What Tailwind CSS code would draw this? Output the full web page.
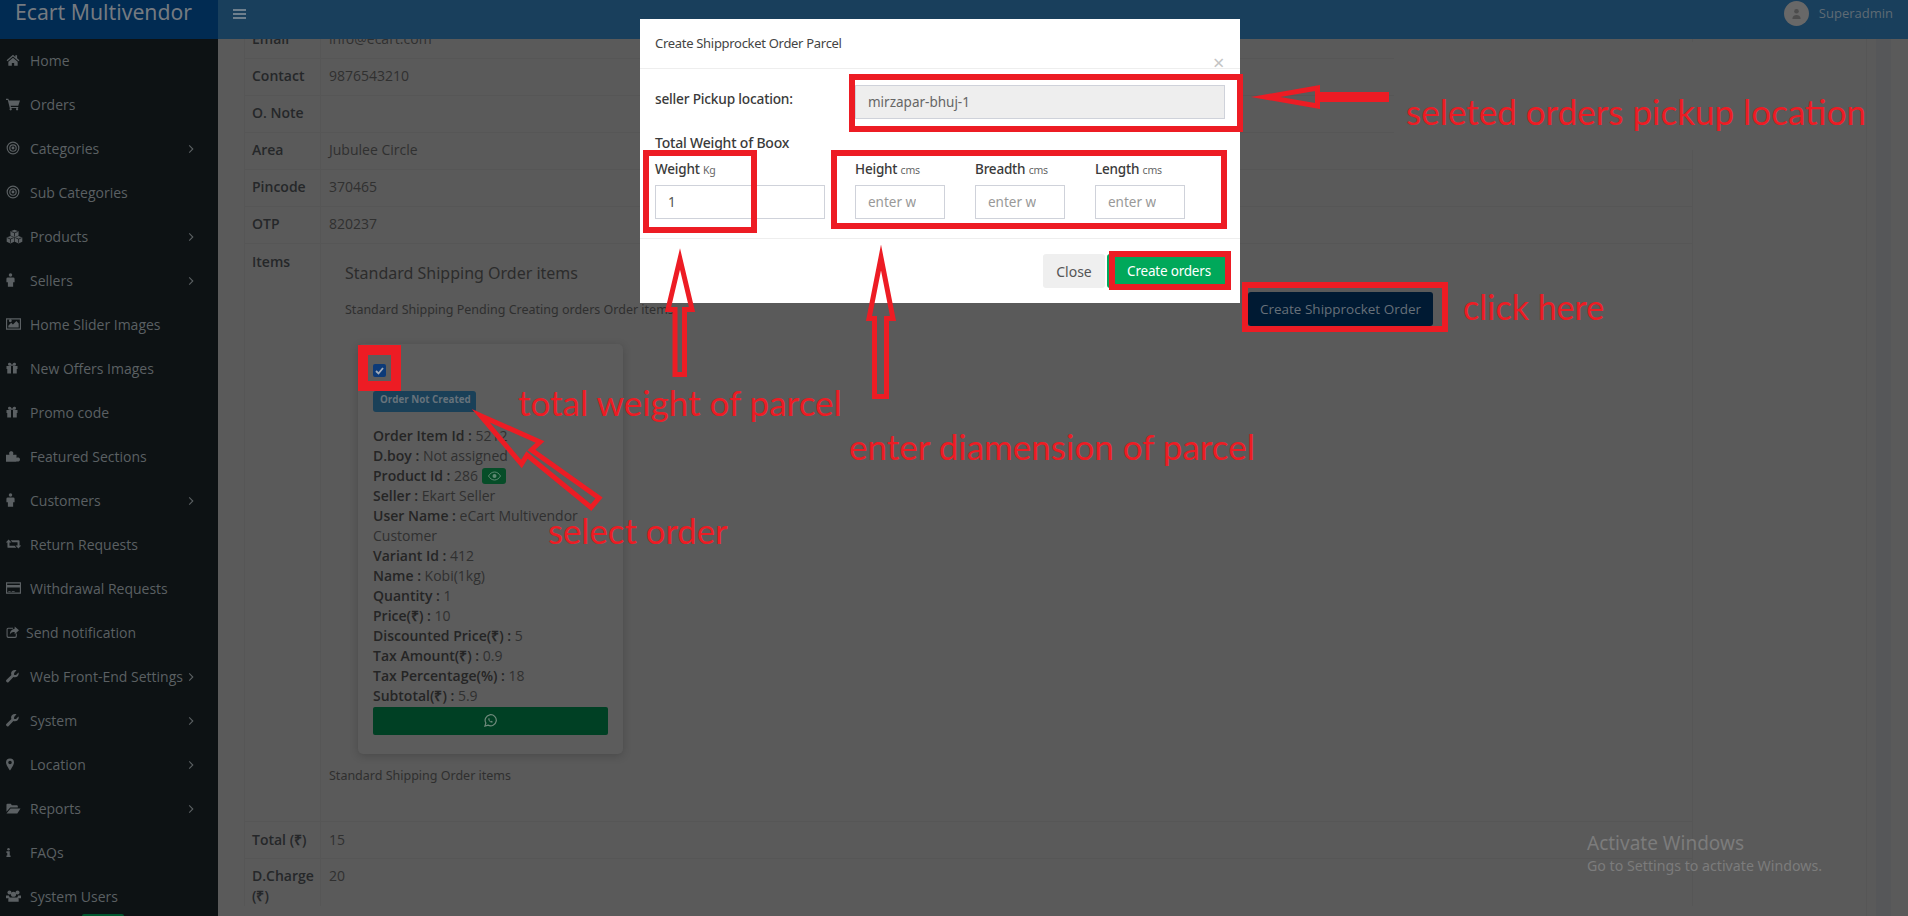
<!DOCTYPE html>
<html lang="en">
<head>
    <meta charset="UTF-8">
    <meta name="viewport" content="width=device-width, initial-scale=1.0">
    <title>Ecart Multivendor</title>
    <script src="https://cdn.jsdelivr.net/npm/@tailwindcss/browser@4"></script>
</head>
<body class="relative h-[916px] w-[1908px] overflow-hidden bg-[#5a5a5a] font-['Open_Sans',sans-serif] text-[14px] text-[#303030]">
    <svg class="hidden">
        <symbol id="i-home" viewBox="0 0 24 24"><path d="M12 3 1 12.500l1.500 1.700L12 6l9.500 8.200 1.500-1.700-4-3.500V4h-3v3zM4 15v7h6v-5h4v5h6v-7l-8-7z"/></symbol>
        <symbol id="i-cart" viewBox="0 0 24 24"><path d="M0 3h4l1 3h19l-3 9H8l.5 2H21v2H6.500L3 5H0z"/><circle cx="8" cy="21" r="2"/><circle cx="19" cy="21" r="2"/></symbol>
        <symbol id="i-target" viewBox="0 0 24 24"><path fill-rule="evenodd" d="M12 1a11 11 0 1 1 0 22 11 11 0 0 1 0-22zm0 2a9 9 0 1 0 0 18 9 9 0 0 0 0-18zm0 2.500a6.500 6.500 0 1 1 0 13 6.500 6.500 0 0 1 0-13zm0 2a4.500 4.500 0 1 0 0 9 4.500 4.500 0 0 0 0-9zm0 2a2.500 2.500 0 1 1 0 5 2.500 2.500 0 0 1 0-5z"/></symbol>
        <symbol id="i-cubes" viewBox="0 0 26 24"><path d="M13 1l6.500 2.500v7L13 13l-6.500-2.500v-7zM6.500 11l6 2.500v7L6.500 23 .5 20.500v-7zM19.500 11l6 2.500v7l-6 2.500-6-2.500v-7z"/><path d="M7.500 4 13 6l5.500-2M13 6v6M1.500 14l5 2 5-2M6.500 16v6M14.500 14l5 2 5-2M19.500 16v6" fill="none" stroke="#0d1214" stroke-width="1.200"/></symbol>
        <symbol id="i-male" viewBox="0 0 14 24"><circle cx="7" cy="3.500" r="3"/><path d="M2.500 7.500h9A2.500 2.500 0 0 1 14 10v6h-2.500v7.500h-9V16H0v-6a2.500 2.500 0 0 1 2.500-2.500z"/></symbol>
        <symbol id="i-image" viewBox="0 0 26 24"><path fill-rule="evenodd" d="M0 2h26v20H0zm2 2v16h22V4zm2 14v-3l5-5 3 3 6-6 4 4v7zm3.500-9a2.500 2.500 0 1 1 0-5 2.500 2.500 0 0 1 0 5z"/></symbol>
        <symbol id="i-gift" viewBox="0 0 24 24"><path fill-rule="evenodd" d="M1 8h22v6h-1.500v9h-19v-9H1zM10 8v15h4V8zM7.500 1.500c2 0 3.500 2 4.500 5 1-3 2.500-5 4.500-5a3 3 0 0 1 1 6h-11a3 3 0 0 1 1-6z"/></symbol>
        <symbol id="i-puzzle" viewBox="0 0 24 24"><path d="M0 10h6c-1-2-1-6 3-6s4 4 3 6h6v5c2-1 6-1 6 3s-4 4-6 3v1H0z"/></symbol>
        <symbol id="i-retweet" viewBox="0 0 26 24"><path d="M4.500 4 9.500 9.500H6V15h9l3 3.500H4a1.500 1.500 0 0 1-1.500-1.500V9.500H-.5zM8 5.500h14a1.500 1.500 0 0 1 1.500 1.500v7.500h3l-5 5.500-5-5.500H20V9h-9z"/></symbol>
        <symbol id="i-card" viewBox="0 0 26 24"><path fill-rule="evenodd" d="M0 2h26v20H0zm2 2v3h22V4zm0 7v9h22v-9zm2 6h4v1.500H4zm6 0h5v1.500h-5z"/></symbol>
        <symbol id="i-share" viewBox="0 0 24 24"><path d="M4 3h9v2H4.500A1.500 1.500 0 0 0 3 6.500v12A1.500 1.500 0 0 0 4.500 20h12a1.500 1.500 0 0 0 1.500-1.500V14h2v5a3 3 0 0 1-3 3H4a3 3 0 0 1-3-3V6a3 3 0 0 1 3-3z"/><path d="M16 1l8 7-8 7v-4c-4 0-7 1-9 5 0-6 3-10 9-11z"/></symbol>
        <symbol id="i-wrench" viewBox="0 0 24 24"><path d="M23.500 6.500c0 4-3 7-7 7-1 0-2-.2-2.800-.6L5 22a3 3 0 0 1-4.200-.1A3 3 0 0 1 1 18l9-8.700c-.4-.8-.6-1.800-.6-2.800 0-4 3-6.500 7-6.500 1 0 2 .2 3 .6L15 5.500V9h3.500l4.500-4.500c.3.600.500 1.300.500 2z"/></symbol>
        <symbol id="i-marker" viewBox="0 0 16 24"><path fill-rule="evenodd" d="M8 0a8 8 0 0 1 8 8c0 4-5 12-8 16C5 20 0 12 0 8a8 8 0 0 1 8-8zm0 4.500a3.500 3.500 0 1 0 0 7 3.500 3.500 0 0 0 0-7z"/></symbol>
        <symbol id="i-folder" viewBox="0 0 26 24"><path d="M0 5a2 2 0 0 1 2-2h6l2 3h9a2 2 0 0 1 2 2v2H7L0 18z"/><path d="M7.500 12H26l-6 9H0z"/></symbol>
        <symbol id="i-info" viewBox="0 0 12 24"><circle cx="6" cy="4" r="3"/><path d="M1 9h8v10h2v4H1v-4h2v-6H1z"/></symbol>
        <symbol id="i-users" viewBox="0 0 26 24"><circle cx="6" cy="6" r="3.500"/><circle cx="20" cy="6" r="3.500"/><circle cx="13" cy="9" r="4.500"/><path d="M0 11h5l2 5H0zM21 11h5v5h-7zM7 14.500h12c2 0 3 1.500 3 3.500v4H4v-4c0-2 1-3.500 3-3.500z"/></symbol>
        <symbol id="i-chev" viewBox="0 0 10 16"><path d="M2 2l6 6-6 6" fill="none" stroke="currentColor" stroke-width="1.800"/></symbol>
    </svg>

    <div class="flex h-full">
        <!-- sidebar -->
        <aside class="w-[218px] shrink-0 bg-[#0d1214] text-[#5b6063]">
            <div class="h-[39px] overflow-hidden bg-[#012b52] pl-[15px] text-[21.200px] leading-[24px] text-[#757a80] font-['Noto_Sans',sans-serif]">Ecart Multivendor</div>
            <nav class="-mt-[1px]">
                <a class="flex h-[44px] items-center"><svg class="ml-[6px] mr-[10px] h-[14px] w-[14px] fill-current"><use href="#i-home"/></svg><span>Home</span></a>
                <a class="flex h-[44px] items-center"><svg class="ml-[6px] mr-[10px] h-[14px] w-[14px] fill-current"><use href="#i-cart"/></svg><span>Orders</span></a>
                <a class="flex h-[44px] items-center"><svg class="ml-[6px] mr-[10px] h-[14px] w-[14px] fill-current"><use href="#i-target"/></svg><span class="flex-1">Categories</span><svg class="mr-[24px] mt-[2px] h-[10px] w-[6px]"><use href="#i-chev"/></svg></a>
                <a class="flex h-[44px] items-center"><svg class="ml-[6px] mr-[10px] h-[14px] w-[14px] fill-current"><use href="#i-target"/></svg><span>Sub Categories</span></a>
                <a class="flex h-[44px] items-center"><svg class="ml-[6px] mr-[7px] h-[15px] w-[17px] fill-current"><use href="#i-cubes"/></svg><span class="flex-1">Products</span><svg class="mr-[24px] mt-[2px] h-[10px] w-[6px]"><use href="#i-chev"/></svg></a>
                <a class="flex h-[44px] items-center"><svg class="ml-[6px] mr-[15px] h-[14px] w-[9px] fill-current"><use href="#i-male"/></svg><span class="flex-1">Sellers</span><svg class="mr-[24px] mt-[2px] h-[10px] w-[6px]"><use href="#i-chev"/></svg></a>
                <a class="flex h-[44px] items-center"><svg class="ml-[6px] mr-[9px] h-[14px] w-[15px] fill-current"><use href="#i-image"/></svg><span>Home Slider Images</span></a>
                <a class="flex h-[44px] items-center"><svg class="ml-[6px] mr-[12px] h-[12px] w-[12px] fill-current"><use href="#i-gift"/></svg><span>New Offers Images</span></a>
                <a class="flex h-[44px] items-center"><svg class="ml-[6px] mr-[12px] h-[12px] w-[12px] fill-current"><use href="#i-gift"/></svg><span>Promo code</span></a>
                <a class="flex h-[44px] items-center"><svg class="ml-[6px] mr-[10px] h-[14px] w-[14px] fill-current"><use href="#i-puzzle"/></svg><span>Featured Sections</span></a>
                <a class="flex h-[44px] items-center"><svg class="ml-[6px] mr-[15px] h-[14px] w-[9px] fill-current"><use href="#i-male"/></svg><span class="flex-1">Customers</span><svg class="mr-[24px] mt-[2px] h-[10px] w-[6px]"><use href="#i-chev"/></svg></a>
                <a class="flex h-[44px] items-center"><svg class="ml-[6px] mr-[9px] h-[14px] w-[15px] fill-current"><use href="#i-retweet"/></svg><span>Return Requests</span></a>
                <a class="flex h-[44px] items-center"><svg class="ml-[6px] mr-[9px] h-[14px] w-[15px] fill-current"><use href="#i-card"/></svg><span>Withdrawal Requests</span></a>
                <a class="flex h-[44px] items-center"><svg class="ml-[6px] mr-[7px] h-[13px] w-[13px] fill-current"><use href="#i-share"/></svg><span>Send notification</span></a>
                <a class="flex h-[44px] items-center"><svg class="ml-[6px] mr-[11px] h-[13px] w-[13px] fill-current"><use href="#i-wrench"/></svg><span class="flex-1 whitespace-nowrap">Web Front-End Settings</span><svg class="mr-[24px] mt-[2px] h-[10px] w-[6px]"><use href="#i-chev"/></svg></a>
                <a class="flex h-[44px] items-center"><svg class="ml-[6px] mr-[11px] h-[13px] w-[13px] fill-current"><use href="#i-wrench"/></svg><span class="flex-1">System</span><svg class="mr-[24px] mt-[2px] h-[10px] w-[6px]"><use href="#i-chev"/></svg></a>
                <a class="flex h-[44px] items-center"><svg class="ml-[6px] mr-[16px] h-[13px] w-[8px] fill-current"><use href="#i-marker"/></svg><span class="flex-1">Location</span><svg class="mr-[24px] mt-[2px] h-[10px] w-[6px]"><use href="#i-chev"/></svg></a>
                <a class="flex h-[44px] items-center"><svg class="ml-[6px] mr-[9px] h-[13px] w-[15px] fill-current"><use href="#i-folder"/></svg><span class="flex-1">Reports</span><svg class="mr-[24px] mt-[2px] h-[10px] w-[6px]"><use href="#i-chev"/></svg></a>
                <a class="flex h-[44px] items-center"><svg class="ml-[6px] mr-[19px] h-[11px] w-[5px] fill-current"><use href="#i-info"/></svg><span>FAQs</span></a>
                <a class="flex h-[44px] items-center"><svg class="ml-[6px] mr-[9px] h-[14px] w-[15px] fill-current"><use href="#i-users"/></svg><span>System Users</span></a>
            </nav>
        </aside>

        <!-- main -->
        <div class="flex min-w-0 flex-1 flex-col">
            <header class="flex h-[39px] shrink-0 items-start justify-between bg-[#193f5c] pl-[15px] pr-[15px]">
                <svg class="mt-[9px] h-[10px] w-[13px] fill-[#6e7f8d]" viewBox="0 0 13 10"><path d="M0 0h13v2H0zM0 4h13v2H0zM0 8h13v2H0z"/></svg>
                <div class="flex items-center gap-[10px] pt-[1px] text-[13px] text-[#5f6b74]">
                    <span class="flex h-[25px] w-[25px] items-center justify-center rounded-full bg-[#686868]"><svg class="h-[11px] w-[11px] fill-[#4d4d4d]" viewBox="0 0 12 12"><circle cx="6" cy="3.500" r="2.500"/><path d="M1.500 12c0-3 2-4.500 4.500-4.500s4.500 1.500 4.500 4.500z"/></svg></span>
                    <span>Superadmin</span>
                </div>
            </header>
            <main class="min-h-0 flex-1 overflow-hidden pl-[26px]">
                <table class="w-[1449px] -mt-[18px] border-collapse border-x border-[#565656]">
                    <tbody>
                        <tr class="h-[37px] border-b border-[#565656] [&>*]:pb-[2px]"><th class="w-[76px] pl-[7px] text-left font-semibold text-[#252729]">Email</th><td class="border-l border-[#565656] pl-[8px]">info@ecart.com</td></tr>
                        <tr class="h-[37px] border-b border-[#565656] [&>*]:pb-[2px]"><th class="pl-[7px] text-left font-semibold text-[#252729]">Contact</th><td class="border-l border-[#565656] pl-[8px]">9876543210</td></tr>
                        <tr class="h-[37px] border-b border-[#565656] [&>*]:pb-[2px]"><th class="pl-[7px] text-left font-semibold text-[#252729]">O. Note</th><td class="border-l border-[#565656] pl-[8px]"></td></tr>
                        <tr class="h-[37px] border-b border-[#565656] [&>*]:pb-[2px]"><th class="pl-[7px] text-left font-semibold text-[#252729]">Area</th><td class="border-l border-[#565656] pl-[8px]">Jubulee Circle</td></tr>
                        <tr class="h-[37px] border-b border-[#565656] [&>*]:pb-[2px]"><th class="pl-[7px] text-left font-semibold text-[#252729]">Pincode</th><td class="border-l border-[#565656] pl-[8px]">370465</td></tr>
                        <tr class="h-[37px] border-b border-[#565656] [&>*]:pb-[2px]"><th class="pl-[7px] text-left font-semibold text-[#252729]">OTP</th><td class="border-l border-[#565656] pl-[8px]">820237</td></tr>
                        <tr class="h-[578px] border-b border-[#565656]">
                            <th class="pl-[7px] pt-[7px] text-left align-top font-semibold text-[#252729]">Items</th>
                            <td class="border-l border-[#565656] pl-[8px] align-top">
                                <h4 class="ml-[16px] mt-[17px] text-[16px] leading-[24px] text-[#2c2c2c] font-['Noto_Sans',sans-serif]">Standard Shipping Order items</h4>
                                <p class="ml-[16px] mt-[15px] whitespace-nowrap text-[12.500px] leading-[20px] text-[#2f2f2f] font-['Noto_Sans',sans-serif]">Standard Shipping Pending Creating orders Order items</p>
                                <div class="ml-[29px] mt-[24px] w-[265px] rounded-[5px] bg-[#5c5c5c] px-[15px] pb-[19px] pt-[20px] shadow-[0_2px_8px_rgba(0,0,0,0.18)]">
                                    <span class="block h-[13px] w-[13px] rounded-[2px] bg-[#0c3a78]"><svg class="h-[13px] w-[13px]" viewBox="0 0 13 13"><path d="M3 7l2.500 2.500L10 4" fill="none" stroke="#a0aab8" stroke-width="1.800"/></svg></span>
                                    <span class="mt-[14px] block h-[21px] w-[103px] whitespace-nowrap rounded-[3px] bg-[#1a4058] px-[7px] text-[9.800px] font-bold leading-[18px] text-[#66727b]">Order Not Created</span>
                                    <div class="mt-[14px] leading-[20px]">
                                        <div><b class="font-semibold text-[#252525]">Order Item Id :</b> 5212</div>
                                        <div><b class="font-semibold text-[#252525]">D.boy :</b> Not assigned</div>
                                        <div class="flex items-center"><b class="font-semibold text-[#252525]">Product Id :</b>&nbsp;286<span class="ml-[4px] flex h-[16px] w-[24px] items-center justify-center rounded-[3px] bg-[#064d28]"><svg class="h-[10px] w-[13px]" viewBox="0 0 13 10"><path d="M.5 5C2 2.500 4 1 6.500 1S11 2.500 12.500 5C11 7.500 9 9 6.500 9S2 7.500.5 5z" fill="none" stroke="#5f8a73"/><circle cx="6.500" cy="5" r="2" fill="#5f8a73"/></svg></span></div>
                                        <div><b class="font-semibold text-[#252525]">Seller :</b> Ekart Seller</div>
                                        <div><b class="font-semibold text-[#252525]">User Name :</b> eCart Multivendor Customer</div>
                                        <div><b class="font-semibold text-[#252525]">Variant Id :</b> 412</div>
                                        <div><b class="font-semibold text-[#252525]">Name :</b> Kobi(1kg)</div>
                                        <div><b class="font-semibold text-[#252525]">Quantity :</b> 1</div>
                                        <div><b class="font-semibold text-[#252525]">Price(₹) :</b> 10</div>
                                        <div><b class="font-semibold text-[#252525]">Discounted Price(₹) :</b> 5</div>
                                        <div><b class="font-semibold text-[#252525]">Tax Amount(₹) :</b> 0.9</div>
                                        <div><b class="font-semibold text-[#252525]">Tax Percentage(%) :</b> 18</div>
                                        <div><b class="font-semibold text-[#252525]">Subtotal(₹) :</b> 5.9</div>
                                    </div>
                                    <div class="mt-[1px] flex h-[28px] items-center justify-center rounded-[2px] bg-[#004024]"><svg class="h-[13px] w-[13px]" viewBox="0 0 14 14"><path d="M1 13l1-3.300A6 6 0 1 1 4.300 12z" fill="none" stroke="#6f8a7c" stroke-width="1.300"/><path d="M5 4.500c-1 1 0 3 1.500 4s2.800 1 3-.2l-1.500-1-.7.700c-.8-.4-1.300-1-1.600-1.700l.6-.7-.8-1.300z" fill="#6f8a7c"/></svg></div>
                                </div>
                                <p class="mt-[12px] text-[12.500px] leading-[20px] text-[#2f2f2f] font-['Noto_Sans',sans-serif]">Standard Shipping Order items</p>
                            </td>
                        </tr>
                        <tr class="h-[37px] border-b border-[#565656]"><th class="pl-[7px] text-left font-semibold text-[#252729]">Total (₹)</th><td class="border-l border-[#565656] pl-[8px]">15</td></tr>
                        <tr><th class="pl-[7px] pt-[7px] text-left align-top font-semibold leading-[20px] text-[#252729]">D.Charge (₹)</th><td class="border-l border-[#565656] pl-[8px] pt-[7px] align-top leading-[20px]">20</td></tr>
                    </tbody>
                </table>
            </main>
        </div>
    </div>

    <!-- right gutter shading and the green badge peeking out at the bottom of the sidebar -->
    <div class="absolute left-[1866px] top-[39px] h-[877px] w-[1px] bg-[#565656]"></div>
    <div class="absolute right-[17px] top-[39px] h-[877px] w-[15px] bg-[#565759]"></div>
    <div class="absolute left-[82px] top-[914px] h-[2px] w-[42px] rounded-t-[3px] bg-[#00572f]"></div>

    <!-- button beside the modal -->
    <button class="absolute left-[1248px] top-[292px] h-[34px] w-[185px] rounded-[3px] bg-[#001a33] text-[13.500px] text-[#677079]">Create Shipprocket Order</button>

    <!-- watermark -->
    <div class="absolute left-[1587px] top-[831px] font-['Noto_Sans',sans-serif] text-[#7c7c7c]">
        <div class="text-[19px] leading-[25px]">Activate Windows</div>
        <div class="text-[14.200px] leading-[20px]">Go to Settings to activate Windows.</div>
    </div>

    <!-- modal -->
    <div class="absolute left-[640px] top-[19px] h-[284px] w-[600px] bg-white font-['Noto_Sans',sans-serif] text-[#444]">
        <div class="flex h-[50px] items-center border-b border-[#eeeeee] pl-[15px] text-[13px] tracking-[-0.3px]">Create Shipprocket Order Parcel</div>
        <span class="absolute left-[573px] top-[34px] text-[20px] leading-[20px] text-[#c4c4c4]">×</span>
        <div class="flex h-[50px] pl-[15px] pt-[16px]">
            <label class="w-[200px] text-[13.700px] font-medium leading-[28px] tracking-[-0.2px] text-[#3a3a3a]">seller Pickup location:</label>
            <input class="h-[34px] w-[370px] border border-[#cfd2da] bg-[#eeeeee] px-[12px] text-[13.500px] text-[#666]" value="mirzapar-bhuj-1" disabled>
        </div>
        <div class="mt-[14px] pl-[15px] text-[14px] font-medium leading-[20px] tracking-[-0.2px] text-[#3a3a3a]">Total Weight of Boox</div>
        <div class="mt-[6px] flex pl-[15px]">
            <div class="w-[200px]">
                <div class="text-[13.500px] font-medium leading-[20px] tracking-[-0.2px] text-[#3a3a3a]">Weight <small class="text-[10.500px] font-normal text-[#666]">Kg</small></div>
                <input class="mt-[5px] h-[34px] w-[170px] border border-[#cfd2da] px-[12px] text-[13.500px] text-[#555]" value="1">
            </div>
            <div class="w-[120px]">
                <div class="text-[13.500px] font-medium leading-[20px] tracking-[-0.2px] text-[#3a3a3a]">Height <small class="text-[10.500px] font-normal text-[#666]">cms</small></div>
                <input class="mt-[5px] h-[34px] w-[90px] border border-[#cfd2da] pl-[12px] pr-[28px] text-[13.500px] placeholder:text-[#999]" placeholder="enter weight">
            </div>
            <div class="w-[120px]">
                <div class="text-[13.500px] font-medium leading-[20px] tracking-[-0.2px] text-[#3a3a3a]">Breadth <small class="text-[10.500px] font-normal text-[#666]">cms</small></div>
                <input class="mt-[5px] h-[34px] w-[90px] border border-[#cfd2da] pl-[12px] pr-[28px] text-[13.500px] placeholder:text-[#999]" placeholder="enter weight">
            </div>
            <div class="w-[90px]">
                <div class="text-[13.500px] font-medium leading-[20px] tracking-[-0.2px] text-[#3a3a3a]">Length <small class="text-[10.500px] font-normal text-[#666]">cms</small></div>
                <input class="mt-[5px] h-[34px] w-[90px] border border-[#cfd2da] pl-[12px] pr-[28px] text-[13.500px] placeholder:text-[#999]" placeholder="enter weight">
            </div>
        </div>
        <div class="absolute inset-x-0 top-[219px] flex h-[65px] items-start justify-end gap-[2px] border-t border-[#eeeeee] pr-[15px] pt-[15px]">
            <button class="h-[34px] w-[62px] rounded-[3px] bg-[#efefef] text-[14px] text-[#555]">Close</button>
            <button class="h-[34px] w-[118px] rounded-[3px] bg-[#00a85a] pl-[6px] text-[13.500px] tracking-[-0.2px] text-white">Create orders</button>
        </div>
    </div>

    <!-- red annotations drawn over the screenshot; the patch is the text box behind the pickup label -->
    <div class="absolute left-[1394px] top-[42px] h-[108px] w-[472px] bg-[#5a5a5a]"></div>
    <div class="absolute left-[849px] top-[74px] h-[58px] w-[394px] border-[6px] border-[#ed1c24]"></div>
    <div class="absolute left-[643px] top-[150px] h-[83px] w-[114px] border-[6px] border-[#ed1c24]"></div>
    <div class="absolute left-[831px] top-[150px] h-[79px] w-[396px] border-[6px] border-[#ed1c24]"></div>
    <div class="absolute left-[1109px] top-[251px] h-[39px] w-[122px] border-[6px] border-[#ed1c24]"></div>
    <div class="absolute left-[1242px] top-[282px] h-[50px] w-[206px] border-[6px] border-[#ed1c24]"></div>
    <div class="absolute left-[358px] top-[345px] h-[46px] w-[43px] border-[10px] border-[#ed1c24]"></div>

    <svg class="absolute left-0 top-0" width="1908" height="916" fill="none" stroke="#ed1c24" stroke-width="5" stroke-miterlimit="20">
        <path d="M1265.500 97 1317.500 88V94.500H1386.500V99.500H1317.500V106z"/>
        <path d="M680 259 692 309.500H684.500V374.500H675V309.500H668z"/>
        <path d="M881 257.500 893 318.500H886.500V396.500H874.500V318.500H869z"/>
        <path d="M480.700 415.700 540 442 531.500 450 599 498 591 507.500 527 455 521.500 464z"/>
    </svg>

    <div class="absolute left-[518px] top-[381px] whitespace-nowrap font-['Lato',sans-serif] text-[35px] leading-[42px] text-[#ed1c24]">total weight of parcel</div>
    <div class="absolute left-[849px] top-[425px] whitespace-nowrap font-['Lato',sans-serif] text-[35px] leading-[42px] text-[#ed1c24]">enter diamension of parcel</div>
    <div class="absolute left-[548px] top-[510px] whitespace-nowrap font-['Lato',sans-serif] text-[34.700px] leading-[42px] text-[#ed1c24]">select order</div>
    <div class="absolute left-[1406px] top-[90px] whitespace-nowrap font-['Lato',sans-serif] text-[35px] leading-[42px] text-[#ed1c24]">seleted orders pickup location</div>
    <div class="absolute left-[1463px] top-[286px] whitespace-nowrap font-['Lato',sans-serif] text-[34px] leading-[42px] text-[#ed1c24]">click here</div>
</body>
</html>
